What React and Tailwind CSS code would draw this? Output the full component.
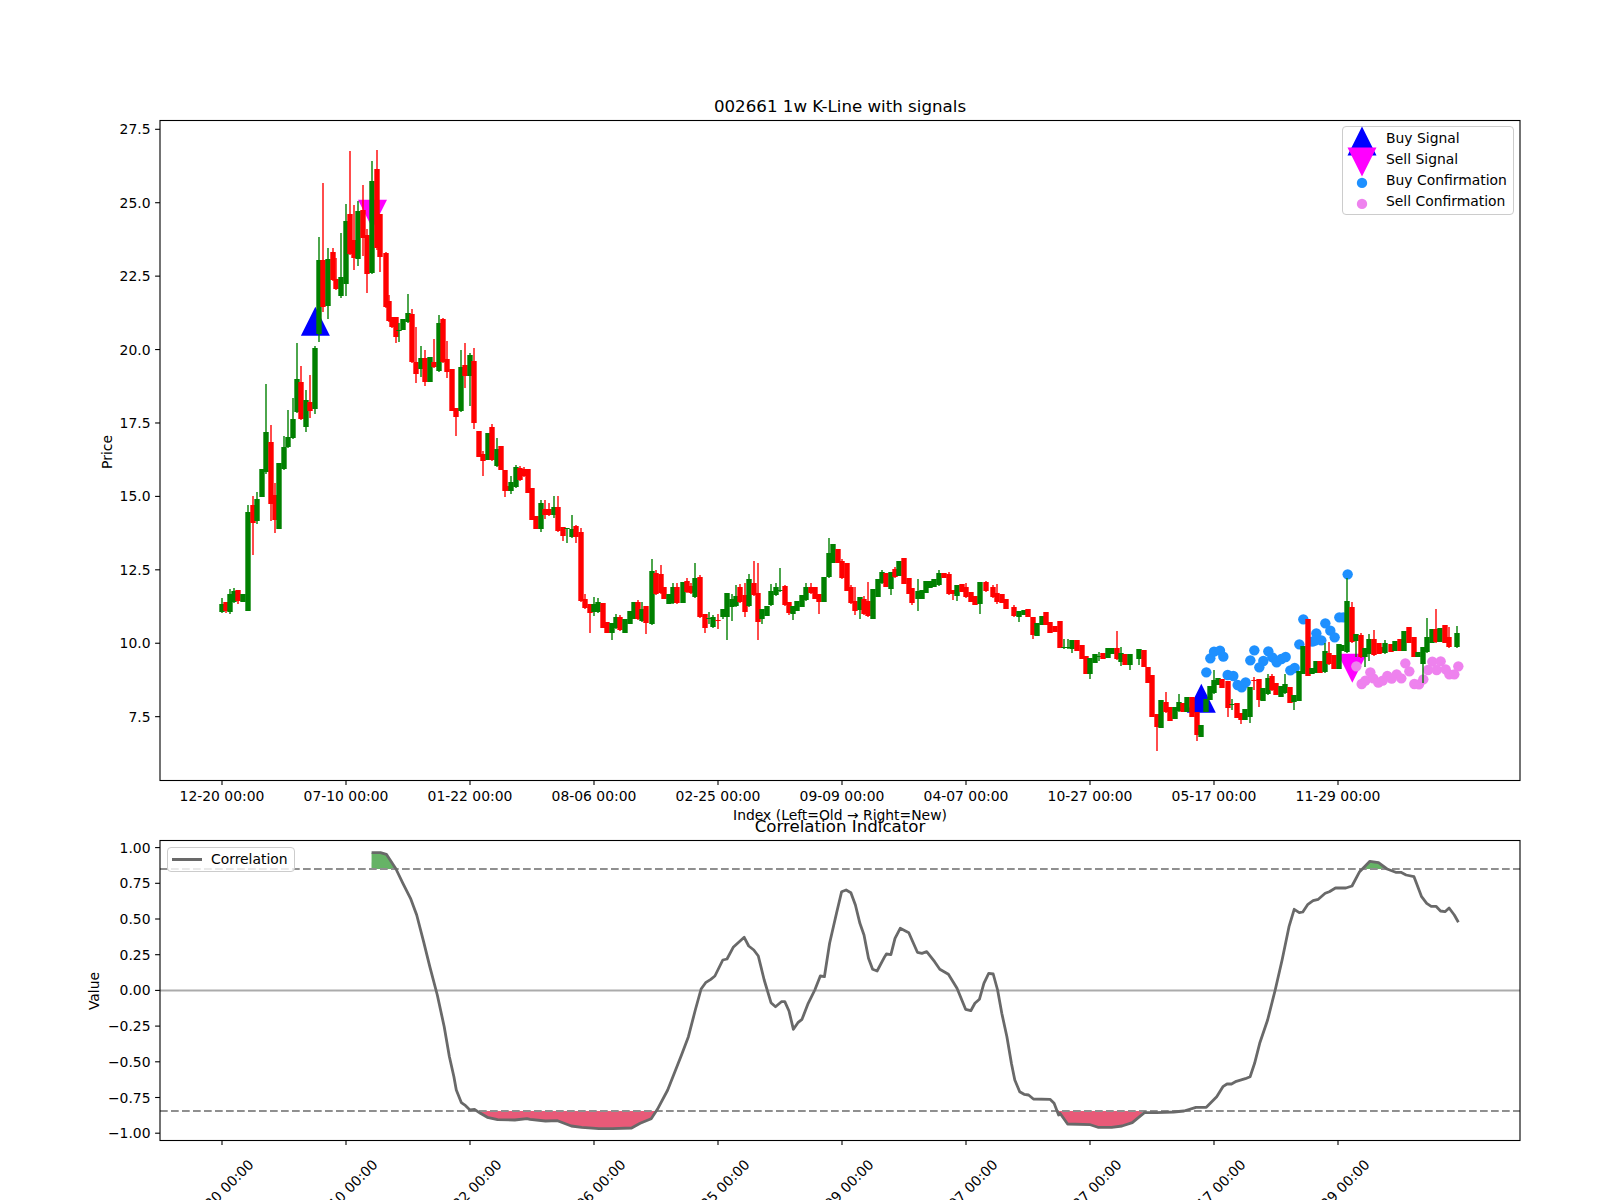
import React from 'react';

// [x, red?, bodyTop, bodyBottom, wickTop, wickBottom]
const candles = [
  [222,0,604,612,598,613],[226,1,602,611,602,613],[230,0,594,612,589,614],[234,0,591,602,588,603],[238,1,590,601,590,604],[243,0,594,602],
  [248,0,512,611,505,611],[253,1,505,523,496,555],[257,0,499,521,492,524],[262,0,469,497],[266,0,432,472,384,474],[271,1,442,504,425,521],
  [275,1,495,520,483,533],[279,0,463,529],[284,0,447,469,436,470],[288,0,437,447,410,448],[293,0,419,438,398,439],[297,0,379,412,343,413],
  [301,1,382,419,366,420],[306,0,400,427,390,432],[310,1,402,411,375,418],[315,0,348,409,346,414],[319,0,260,334,237,342],[323,1,260,307,183,312],
  [328,0,259,306,248,319],[333,1,252,280,248,281],[336,1,279,289,258,290],[341,0,277,296,233,298],[346,0,221,284,204,296],[350,1,214,254,151,255],
  [354,1,240,258,205,270],[358,0,211,259,201,266],[363,1,210,238,185,256],[367,1,235,274,229,293],[372,0,181,273,161,274],[377,1,169,248,150,250],
  [380,1,214,257,214,272],[386,1,253,307,252,308],[389,1,301,321,295,322],[392,1,317,327,317,328],[396,1,317,337,317,343],[399,0,330,331,323,342],
  [403,0,319,330],[408,0,313,322,294,323],[412,1,314,362,309,363],[416,1,362,374,327,383],[421,0,358,369,346,377],[425,1,358,382,350,386],
  [430,0,357,382],[434,1,362,367,339,368],[439,0,323,371,315,372],[443,1,319,362,318,363],[447,1,359,372,341,378],[452,1,369,411],
  [456,1,408,417,408,436],[461,0,367,411,350,412],[465,1,365,376,343,388],[470,0,355,376,353,406],[474,1,361,423,348,429],[479,1,431,457],
  [483,1,454,461,451,476],[488,0,433,460],[492,1,427,460,424,461],[497,0,449,466,438,467],[501,1,446,470],[505,1,470,491,470,497],
  [508,1,486,491],[511,0,482,491,476,494],[516,0,467,487,465,488],[520,1,468,480,466,481],[524,1,469,476,467,477],[528,1,469,493],
  [532,1,488,520],[536,1,516,529],[541,0,503,529,500,532],[545,1,509,515,500,519],[549,1,509,515,503,516],[554,0,507,515,496,518],
  [558,1,507,531,496,532],[563,1,527,536,527,541],[567,0,528,529,528,543],[572,0,529,537,515,538],[576,1,526,537,525,543],[581,1,532,601,528,602],
  [585,1,599,608,594,609],[590,1,604,613,604,633],[594,0,604,612,597,616],[598,0,602,612,598,613],[603,1,603,628],[607,1,622,633],
  [612,0,623,633,623,640],[616,0,617,628,614,629],[620,1,617,630,615,631],[625,0,619,633],[630,0,611,624],[634,0,602,619],
  [638,1,602,619,600,620],[642,0,609,621,602,622],[646,1,606,623,606,634],[652,0,571,624,559,625],[656,1,573,594,570,595],[661,1,574,593,565,594],
  [664,1,587,599],[669,0,594,604],[673,0,587,603,583,604],[677,1,587,603,583,604],[683,0,582,603],[687,1,581,592,578,593],
  [691,1,586,593,583,594],[695,0,578,597,563,598],[700,1,577,617,575,618],[705,1,614,628,614,633],[709,0,618,619,612,624],[713,0,617,627,615,628],
  [718,1,620,621,614,629],[723,0,609,617,609,619],[727,0,593,617,593,640],[732,0,599,607,594,621],[736,0,596,606,585,607],[740,1,587,602,584,603],
  [745,1,595,612,583,617],[749,0,579,606,574,607],[754,1,583,595,561,596],[758,1,593,622,563,640],[762,0,609,619,609,624],[767,0,606,616],
  [771,0,591,605,584,606],[776,0,587,595,583,596],[780,0,590,591,568,592],[785,1,586,605,585,606],[789,1,602,613,602,615],[793,0,606,614,606,620],
  [797,0,601,611],[802,0,595,607],[806,0,587,600,583,601],[811,1,587,593,583,594],[815,1,587,599],[819,1,594,602,594,614],
  [824,0,577,602],[829,0,553,577,538,578],[833,0,544,563],[838,1,549,563],[842,1,561,578,559,579],[847,1,563,591],
  [851,1,587,603,585,604],[855,1,601,611,587,615],[860,0,597,610,597,619],[864,1,599,614,596,615],[868,1,601,616,582,617],[873,0,589,619],
  [878,0,579,597],[882,0,572,583,570,584],[886,1,573,587],[891,0,572,589,572,595],[895,1,569,577,567,578],[899,0,561,576],
  [904,1,558,584],[909,1,578,594],[912,1,588,603,588,605],[918,0,591,599,579,611],[922,0,590,599],[926,0,581,593],
  [930,0,581,588],[934,0,579,587],[939,0,573,585,570,586],[944,1,573,578],[949,1,574,594,572,595],[953,1,590,594,590,600],
  [957,0,585,596,585,601],[962,1,584,592],[966,1,587,597,583,598],[971,1,592,602],[975,1,596,605],[980,0,582,604,582,614],
  [986,1,582,591,581,592],[993,1,587,597,585,598],[997,1,593,602,584,604],[1002,1,594,603],[1006,1,599,609],[1014,1,607,616,605,617],
  [1019,0,611,617,611,622],[1024,0,610,615],[1028,1,609,617],[1033,1,617,635,617,639],[1037,0,623,636],[1042,0,616,625],
  [1046,1,612,625],[1050,1,622,633],[1055,1,626,632],[1060,1,621,648],[1064,0,647,648,639,649],[1068,0,647,648,639,649],
  [1072,0,640,649,640,653],[1077,1,640,651],[1082,1,645,659],[1086,1,656,674],[1090,0,658,674,658,679],[1095,0,654,663],
  [1099,0,656,657,652,661],[1103,1,653,659],[1108,0,648,658],[1112,0,648,654],[1117,1,648,659,631,660],[1121,0,653,662,647,666],
  [1125,1,654,665],[1130,0,654,665,654,670],[1139,0,649,659,649,665],[1144,1,650,667],[1148,1,667,683],[1152,1,675,717],
  [1157,1,714,727,714,751],[1161,0,700,728],[1166,1,702,712,692,713],[1170,1,707,721],[1175,0,707,719],[1179,0,702,711,694,712],
  [1183,1,703,712],[1187,0,697,712],[1192,1,697,717],[1197,1,712,735,712,741],[1201,0,725,737],[1206,0,699,712],
  [1210,0,686,700],[1214,0,680,693,670,694],[1218,0,678,685],[1222,1,679,688],[1228,1,681,708,681,717],[1232,0,704,705,699,710],
  [1237,1,703,718],[1241,1,713,720,713,724],[1245,0,709,720],[1250,0,687,717,687,723],[1254,1,680,681,677,690],[1259,1,679,700,679,707],
  [1263,0,688,701],[1268,0,678,694,674,695],[1272,1,676,690,674,691],[1276,1,683,695],[1281,0,686,697],[1285,0,684,693,674,694],
  [1290,1,687,703],[1294,0,695,702,695,710],[1299,0,671,701],[1303,0,646,674],[1308,1,619,676],[1312,0,668,674],
  [1316,0,661,673],[1320,1,661,673],[1325,0,651,672,643,673],[1329,1,653,664,642,665],[1334,1,655,669],[1339,0,644,669],
  [1342,0,645,651],[1347,0,601,652,578,653],[1352,1,607,642,602,643],[1356,0,634,641,634,657],[1361,1,635,657,633,658],[1365,0,648,657,648,667],
  [1369,0,639,654,634,661],[1374,1,639,655,630,656],[1379,1,643,654],[1382,1,647,653],[1385,0,643,653,640,654],[1391,1,644,652],
  [1395,0,641,651],[1400,1,639,651],[1404,0,631,651],[1409,1,627,643],[1414,1,637,657],[1418,0,652,657],
  [1423,0,647,664,647,683],[1427,0,637,652,618,653],[1432,0,629,643],[1436,1,629,642,609,643],[1440,0,628,642],[1445,1,625,643],
  [1449,1,637,647,627,648],[1457,0,633,647,626,648],
];

const blueDots = [[439,397],[451,355],[462,335],[480,332],[490,350],[503,405],[520,408],[533,435],[545,442],[557,427],[571,361],[583,331],[598,382],[610,363],[625,334],[637,352],[650,367],[664,357],[677,351],[691,391],[704,384],[718,313],[730,238],[757,305],[769,280],[765,302],[784,301],[796,250],[811,272],[824,292],[838,232],[850,232],[863,103]];
const violetDots = [[889,379],[905,432],[916,422],[931,397],[940,415],[955,428],[968,422],[982,408],[995,416],[1010,403],[1024,415],[1036,370],[1048,394],[1063,432],[1077,433],[1090,418],[1104,390],[1117,365],[1130,390],[1142,364],[1157,388],[1168,403],[1183,403],[1195,379]];

const corr = [
  ...[[1079,98],[1105,98],[1122,103],[1150,147],[1170,190],[1192,235],[1210,285],[1230,365],[1248,440],[1270,525],[1290,620],[1305,710],[1318,770],[1325,810],[1340,848],[1352,857],[1365,870],[1378,868],[1395,880],[1415,892],[1445,899],[1495,900],[1530,896]]
    .map(([x, y]) => [x / 2.904, 820 + y / 3]),
  ...[[0,838],[45,843],[80,842],[120,858],[150,862],[200,866],[240,866],[295,864],[320,850],[352,836],[370,808],[400,750],[440,645],[460,590],[480,510],[497,447],[510,428],[525,418],[537,408],[560,360],[572,357],[590,322],[622,292],[635,318],[650,330],[663,348],[680,420],[700,488],[713,500],[730,485],[740,485],[752,513],[765,568],[778,548],[790,538],[808,490],[827,450],[843,408],[855,410],[870,310],[890,220],[905,155],[918,150],[932,158],[945,195],[958,250],[970,285],[983,355],[995,388],[1008,393],[1030,350],[1035,342],[1048,344],[1060,295],[1075,265],[1100,278],[1125,337],[1138,340],[1152,335],[1175,365],[1190,388],[1215,403],[1240,445],[1265,508],[1280,512],[1292,490],[1305,478],[1318,430],[1332,400],[1345,402],[1358,450],[1370,520],[1385,590],[1398,670],[1408,720],[1422,755],[1435,763],[1448,765],[1462,777],[1510,778],[1522,790],[1535,825]]
    .map(([x, y]) => [530 + x / 2.904, 840 + y / 3]),
  ...[[0,880],[22,912],[88,914],[110,922],[150,922],[180,918],[210,908],[245,878],[280,878],[330,876],[360,873],[395,862],[425,862],[455,830],[473,800],[485,792],[498,792],[512,784],[538,776],[552,770],[565,730],[580,670],[603,600],[625,510],[645,420],[665,320],[680,268],[695,278],[705,276],[720,253],[735,242],[750,238],[770,220],[782,215],[800,204],[830,204],[848,198],[870,155],[900,124],[925,128],[950,147],[975,157],[990,157],[1005,165],[1028,170],[1050,230],[1065,250],[1078,259],[1092,259],[1105,273],[1118,275],[1130,264],[1145,285],[1157,307]]
    .map(([x, y]) => [1060 + x / 2.904, 820 + y / 3]),
];

const toPoints = (pts) => pts.map(([x, y]) => `${x.toFixed(1)},${y.toFixed(1)}`).join(' ');

const fillArea = (from, to, level) =>
  toPoints([[from, level], ...corr.filter(([x]) => x >= from && x <= to), [to, level]]);

const xTicks = [222, 346, 470, 594, 718, 842, 966, 1090, 1214, 1338];
const xLabels = ['12-20 00:00', '07-10 00:00', '01-22 00:00', '08-06 00:00', '02-25 00:00', '09-09 00:00', '04-07 00:00', '10-27 00:00', '05-17 00:00', '11-29 00:00'];
const priceTicks = ['27.5', '25.0', '22.5', '20.0', '17.5', '15.0', '12.5', '10.0', '7.5'];
const valueTicks = ['1.00', '0.75', '0.50', '0.25', '0.00', '\u22120.25', '\u22120.50', '\u22120.75', '\u22121.00'];

const Triangle = ({ x, y, down, color }) => {
  const tip = down ? y + 14.5 : y - 14.5;
  const base = down ? y - 14.5 : y + 14.5;
  return <polygon points={`${x},${tip} ${x - 14.5},${base} ${x + 14.5},${base}`} fill={color} />;
};

const YTicks = ({ labels, top, step }) =>
  labels.map((label, i) => {
    const y = top + i * step;
    return (
      <g key={label}>
        <line x1="155.1" x2="160" y1={y} y2={y} stroke="black" strokeWidth="1.1" />
        <text x="150.5" y={y + 5} textAnchor="end" fill="black">{label}</text>
      </g>
    );
  });

const LegendRow = ({ label, children }) => (
  <div className="flex items-center h-[21px] pl-[4px] gap-[9px]">
    <svg viewBox="-15 -10.5 30 21" className="w-[30px] h-[21px] overflow-visible shrink-0">{children}</svg>
    <span className="leading-[21px] text-black">{label}</span>
  </div>
);

const PriceChart = () => (
  <div className="relative w-[1360px] h-[660px] ml-[160px]">
    <svg viewBox="160 120 1360 660" className="absolute inset-0 w-full h-full overflow-visible">
      <text x="840" y="111.5" textAnchor="middle" fill="black" className="text-[16.67px]">002661 1w K-Line with signals</text>
      <Triangle x={315.4} y={321.2} color="#0000ff" />
      <Triangle x={372.5} y={214.2} down color="#ff00ff" />
      <Triangle x={1201.3} y={698.2} color="#0000ff" />
      <Triangle x={1352.3} y={668.3} down color="#ff00ff" />
      {blueDots.map(([x, y], i) => <circle key={i} cx={1060 + x / 3} cy={540 + y / 3} r="5.2" fill="#1e90ff" />)}
      {violetDots.map(([x, y], i) => <circle key={i} cx={1060 + x / 3} cy={540 + y / 3} r="5.2" fill="#ee82ee" />)}
      {candles.map(([x, red, top, bottom, wickTop = top, wickBottom = bottom]) => {
        const color = red ? '#ff0000' : '#008000';
        return (
          <g key={x}>
            <line x1={x} x2={x} y1={wickTop} y2={wickBottom} stroke={color} strokeWidth="1.4" />
            <rect x={x - 2.7} y={top} width="5.4" height={bottom - top} fill={color} />
          </g>
        );
      })}
      <rect x="160" y="120.5" width="1360" height="660" fill="none" stroke="black" strokeWidth="1.1" />
      <YTicks labels={priceTicks} top={129.3} step={73.42} />
      {xTicks.map((x, i) => (
        <g key={x}>
          <line x1={x} x2={x} y1="780" y2="784.9" stroke="black" strokeWidth="1.1" />
          <text x={x} y="801" textAnchor="middle" fill="black">{xLabels[i]}</text>
        </g>
      ))}
      <text x="840" y="820" textAnchor="middle" fill="black">Index (Left=Old → Right=New)</text>
      <text x="112" y="452" textAnchor="middle" fill="black" transform="rotate(-90 112 452)">Price</text>
    </svg>
    <div className="absolute right-[6px] top-[6px] w-[172px] h-[89px] pt-[1px] bg-white/80 border border-[#cccccc] rounded-[4px]">
      <LegendRow label="Buy Signal"><polygon points="0,-12 -14.5,17 14.5,17" fill="#0000ff" /></LegendRow>
      <LegendRow label="Sell Signal"><polygon points="0,17 -14.5,-12 14.5,-12" fill="#ff00ff" /></LegendRow>
      <LegendRow label="Buy Confirmation"><circle cy="2.4" r="5.2" fill="#1e90ff" /></LegendRow>
      <LegendRow label="Sell Confirmation"><circle cy="2.4" r="5.2" fill="#ee82ee" /></LegendRow>
    </div>
  </div>
);

const CorrelationChart = () => (
  <div className="relative w-[1360px] h-[300px] ml-[160px] mt-[60px]">
    <svg viewBox="160 840 1360 300" className="absolute inset-0 w-full h-full overflow-visible">
      <text x="840" y="831.5" textAnchor="middle" fill="black" className="text-[16.67px]">Correlation Indicator</text>
      <polygon points={fillArea(371.5, 396, 869)} fill="#66b366" />
      <polygon points={fillArea(1363, 1385, 869)} fill="#66b366" />
      <polygon points={fillArea(480, 657, 1111)} fill="#e85a78" />
      <polygon points={fillArea(1058, 1144, 1111)} fill="#e85a78" />
      <line x1="160" x2="1520" y1="990.4" y2="990.4" stroke="#ababab" strokeWidth="2" />
      <line x1="160" x2="1520" y1="869" y2="869" stroke="#8f8f8f" strokeWidth="2" strokeDasharray="7.7 3.3" />
      <line x1="160" x2="1520" y1="1111" y2="1111" stroke="#8f8f8f" strokeWidth="2" strokeDasharray="7.7 3.3" />
      <polyline points={toPoints(corr)} fill="none" stroke="#696969" strokeWidth="2.8" strokeLinejoin="round" />
      <rect x="160" y="840.5" width="1360" height="300" fill="none" stroke="black" strokeWidth="1.1" />
      <YTicks labels={valueTicks} top={847.6} step={35.7} />
      {xTicks.map((x, i) => (
        <g key={x}>
          <line x1={x} x2={x} y1="1140" y2="1144.9" stroke="black" strokeWidth="1.1" />
          <text x={x - 1} y="1197" textAnchor="middle" fill="black" transform={`rotate(-45 ${x - 1} 1192)`}>{xLabels[i]}</text>
        </g>
      ))}
      <text x="99" y="991" textAnchor="middle" fill="black" transform="rotate(-90 99 991)">Value</text>
    </svg>
    <div className="absolute left-[7px] top-[7px] w-[128px] h-[25px] flex items-center gap-[9px] pl-[4px] bg-white/80 border border-[#cccccc] rounded-[4px]">
      <div className="w-[30px] h-[3px] bg-[#696969] shrink-0" />
      <span className="text-black">Correlation</span>
    </div>
  </div>
);

const App = () => (
  <div className="w-[1600px] h-[1200px] overflow-hidden bg-white pt-[120px] font-['DejaVu_Sans',sans-serif] text-[13.9px]">
    <PriceChart />
    <CorrelationChart />
  </div>
);

export default App;
